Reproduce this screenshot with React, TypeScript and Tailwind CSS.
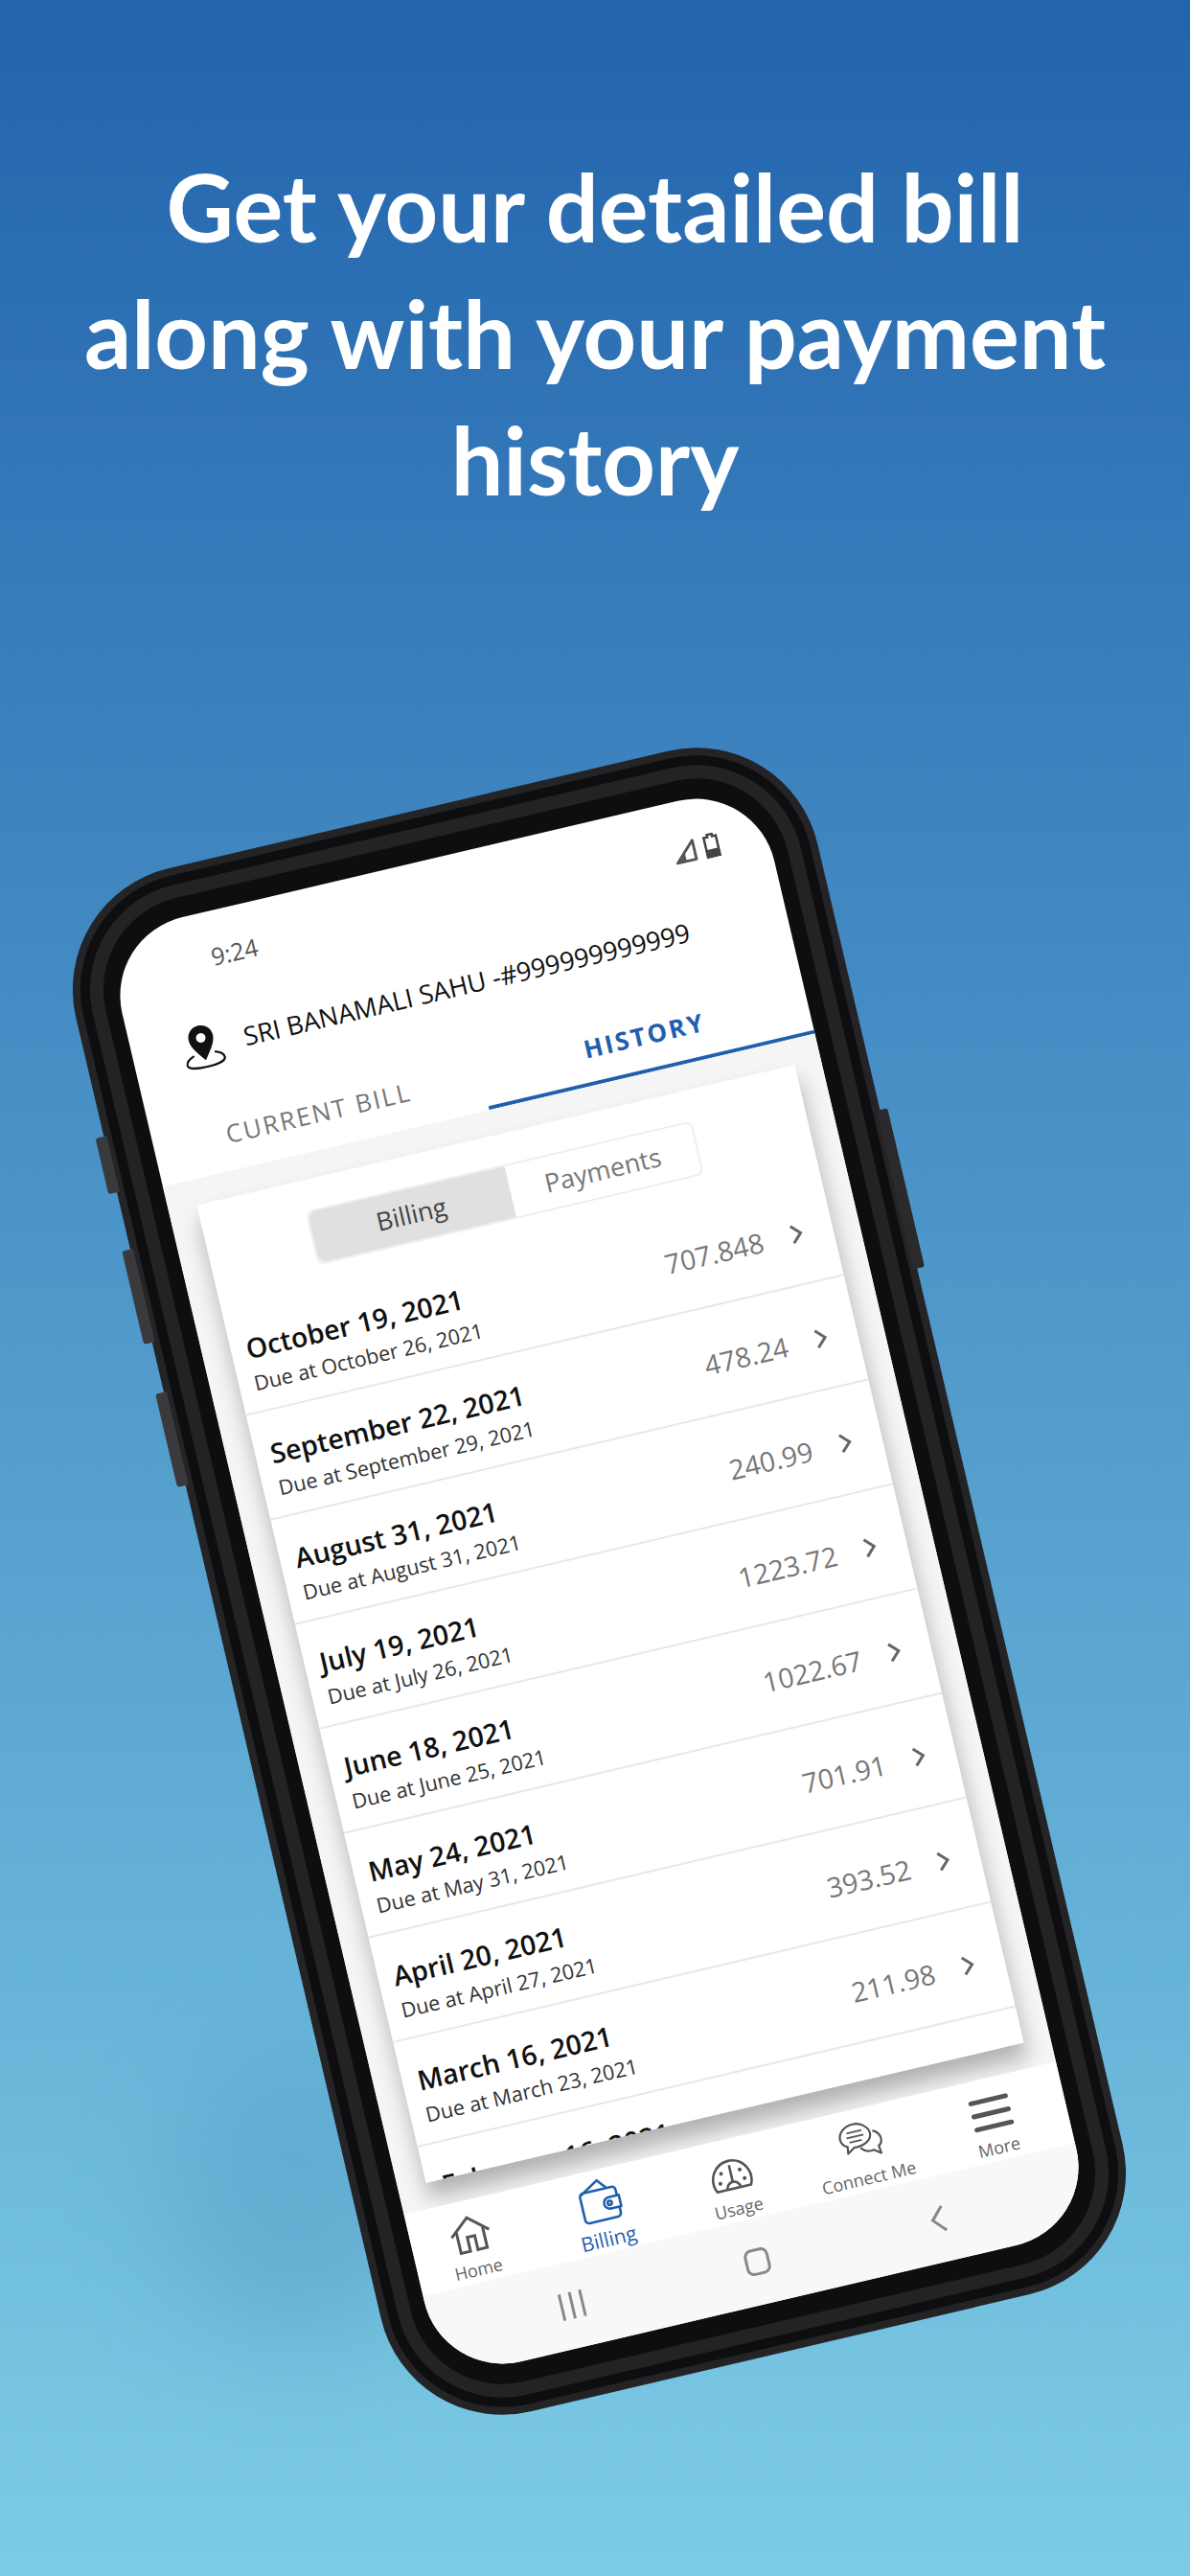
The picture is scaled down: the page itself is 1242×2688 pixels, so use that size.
const bills = [
  { date: 'October 19, 2021', due: 'Due at October 26, 2021', amount: '707.848' },
  { date: 'September 22, 2021', due: 'Due at September 29, 2021', amount: '478.24' },
  { date: 'August 31, 2021', due: 'Due at August 31, 2021', amount: '240.99' },
  { date: 'July 19, 2021', due: 'Due at July 26, 2021', amount: '1223.72' },
  { date: 'June 18, 2021', due: 'Due at June 25, 2021', amount: '1022.67' },
  { date: 'May 24, 2021', due: 'Due at May 31, 2021', amount: '701.91' },
  { date: 'April 20, 2021', due: 'Due at April 27, 2021', amount: '393.52' },
  { date: 'March 16, 2021', due: 'Due at March 23, 2021', amount: '211.98' },
  { date: 'February 16, 2021', due: 'Due at February 23, 2021', amount: '330.10' },
]

function Pin() {
  return (
    <svg width="44" height="46" viewBox="0 0 44 46" fill="none">
      <path d="M22 1C14 1 9 7 9 14c0 8 8 17 13 24 5-7 13-16 13-24C35 7 30 1 22 1z" fill="#111" />
      <circle cx="22" cy="14" r="5" fill="#fff" />
      <path d="M11 31C5 33 2 36 2 39c0 4 9 6 20 6s20-2 20-6c0-3-3-6-9-8" stroke="#111" strokeWidth="2.2" />
    </svg>
  )
}

function Chevron() {
  return (
    <svg width="14" height="24" viewBox="0 0 14 24" fill="none">
      <path d="M2 3l9 9-9 9" stroke="#666" strokeWidth="3" />
    </svg>
  )
}

function HomeIcon() {
  return (
    <svg width="44" height="40" viewBox="0 0 44 40" fill="none" stroke="#555" strokeWidth="3">
      <path d="M2 20L22 3l20 17" />
      <path d="M8 16v22h10V23h8v15h10V16" />
    </svg>
  )
}

function WalletIcon() {
  return (
    <svg width="46" height="46" viewBox="0 0 46 46" fill="none" stroke="#1f5fae" strokeWidth="2.6" strokeLinejoin="round">
      <path d="M4 14L24 2l8 10" />
      <path d="M41 22v-6a4 4 0 0 0-4-4H7a4 4 0 0 0-4 4v24a4 4 0 0 0 4 4h30a4 4 0 0 0 4-4v-6" />
      <path d="M43 22H32a6 6 0 0 0 0 12h11z" />
      <circle cx="32" cy="28" r="2.2" />
    </svg>
  )
}

function GaugeIcon() {
  return (
    <svg width="44" height="36" viewBox="0 0 44 36" fill="none" stroke="#555" strokeWidth="2.6" strokeLinejoin="round">
      <path d="M4 33C1 27 1 20 5 13a20 20 0 0 1 34 0c4 7 4 14 1 20z" />
      <path d="M15 33a7 7 0 0 1 14 0" />
      <path d="M22 8v18" />
      <circle cx="9" cy="25" r="1.5" fill="#555" strokeWidth="1" />
      <circle cx="12" cy="15" r="1.5" fill="#555" strokeWidth="1" />
      <circle cx="32" cy="15" r="1.5" fill="#555" strokeWidth="1" />
      <circle cx="35" cy="25" r="1.5" fill="#555" strokeWidth="1" />
    </svg>
  )
}

function ChatIcon() {
  return (
    <svg width="46" height="42" viewBox="0 0 46 42" fill="none" stroke="#555" strokeWidth="2.2" strokeLinejoin="round">
      <path d="M18 2C9 2 2 8 2 15c0 4 2 7 6 9l-1 7 8-5c1 .2 2 .3 3 .3 9 0 16-5 16-11.300S27 2 18 2z" />
      <path d="M10 10h16M9 15h18M11 20h13" strokeWidth="1.8" />
      <path d="M37 13c4 2 7 6 7 10 0 3-2 6-4 7l1 8-7-5c-5 1-10-1-13-5" />
    </svg>
  )
}

function Bill({ date, due, amount }: { date: string; due: string; amount: string }) {
  return (
    <div className="flex h-[112px] shrink-0 items-start justify-between border-b-2 border-[#e8e8e8] pl-[16px] pr-[31px] pt-[26px]">
      <div>
        <p className="text-[28.5px] leading-[37px] font-semibold text-[#111]">{date}</p>
        <p className="mt-[3px] text-[21.6px] leading-[30px] text-[#333]">{due}</p>
      </div>
      <div className="flex items-center gap-[29px] pt-[13px]">
        <span className="text-[28.5px] leading-[38px] text-[#777]">{amount}</span>
        <Chevron />
      </div>
    </div>
  )
}

function NavItem({ label, active, children }: { label: string; active?: boolean; children: React.ReactNode }) {
  return (
    <div className="flex w-[120px] flex-col items-center justify-end">
      <div className="flex h-[48px] items-end">{children}</div>
      <span className={active ? 'mt-[4px] text-[21px] leading-[28px] text-[#1f5fae]' : 'mt-[4px] text-[18px] leading-[28px] text-[#666]'}>
        {label}
      </span>
    </div>
  )
}

function Phone() {
  return (
    <div className="relative ml-[228px] mt-[277px] h-[1654px] w-[795px] rotate-[-13.2deg]">
      <div className="absolute left-[-9px] top-[257px] h-[60px] w-[12px] rounded-l-[3px] bg-[#3a3a3d]" />
      <div className="absolute left-[-9px] top-[378px] h-[100px] w-[12px] rounded-l-[3px] bg-[#3a3a3d]" />
      <div className="absolute left-[-9px] top-[531px] h-[100px] w-[12px] rounded-l-[3px] bg-[#3a3a3d]" />
      <div className="absolute right-[-8px] top-[415px] h-[170px] w-[12px] rounded-r-[3px] bg-[#2a2a2d]" />
      <div className="h-full w-full rounded-[130px] bg-[#242427] p-[8px]">
        <div className="h-full w-full rounded-[122px] bg-[#0e0e10] p-[10px]">
          <div className="h-full w-full rounded-[112px] bg-[#232326] p-[14px]">
            <div className="h-full w-full rounded-[98px] bg-[#0e0e10] px-[16px] py-[21px]">
              <div className="flex h-full flex-col overflow-hidden rounded-[84px] bg-white font-['Open_Sans',sans-serif]">
                <div className="flex h-[104px] shrink-0 items-end justify-between pb-[38px] pl-[104px] pr-[52px]">
                  <span className="mb-[4px] text-[25px] leading-[30px] text-[#555]">9:24</span>
                  <div className="flex items-center gap-[8px]">
                    <svg width="26" height="26" viewBox="0 0 20 20" fill="none">
                      <path d="M18 2.500V18H2.500z" stroke="#555" strokeWidth="2.2" strokeLinejoin="round" />
                      <path d="M10 9v9H2z" fill="#555" />
                    </svg>
                    <svg width="16" height="26" viewBox="0 0 12 20" fill="none">
                      <path d="M4 1h4v2h3v16H1V3h3z" stroke="#444" strokeWidth="2" />
                      <path d="M1 13h10v6H1z" fill="#444" />
                    </svg>
                  </div>
                </div>
                <div className="flex h-[64px] shrink-0 items-center gap-[22px] pl-[52px]">
                  <Pin />
                  <span className="text-[27px] leading-[34px] text-[#111]">SRI BANAMALI SAHU -#999999999999</span>
                </div>
                <div className="flex h-[101px] shrink-0">
                  <div className="flex w-[50%] items-end justify-center pb-[20px] pl-[2px]">
                    <span className="text-[26px] leading-[36px] tracking-[2px] text-[#777]">CURRENT BILL</span>
                  </div>
                  <div className="flex w-[50%] items-end justify-center border-b-[4px] border-[#1f5fae] pb-[17px] pl-[2px]">
                    <span className="text-[26px] leading-[36px] font-bold tracking-[2.5px] text-[#1f5fae]">HISTORY</span>
                  </div>
                </div>
                <div className="flex min-h-0 flex-1 flex-col bg-[#f5f5f5] pb-[27px] pl-[30px] pr-[28px] pt-[27px]">
                  <div className="flex min-h-0 flex-1 flex-col overflow-hidden bg-white shadow-[0_16px_22px_rgba(0,0,0,0.28)]">
                    <div className="flex shrink-0 justify-center pr-[10px] pt-[32px]">
                      <div className="flex h-[58px] w-[414px] rounded-[8px] border-2 border-[#eeeeee]">
                        <div className="flex w-[211px] items-center justify-center rounded-l-[8px] bg-[#e0e0e0] text-[26.5px] text-[#444]">Billing</div>
                        <div className="flex flex-1 items-center justify-center text-[27px] text-[#777]">Payments</div>
                      </div>
                    </div>
                    <div className="flex flex-col pt-[24px]">
                      {bills.map(b => <Bill key={b.date} {...b} />)}
                    </div>
                  </div>
                </div>
                <div className="relative flex h-[87px] shrink-0 justify-between bg-white pl-[3px] pr-[18px]">
                  <NavItem label="Home"><HomeIcon /></NavItem>
                  <NavItem label="Billing" active><WalletIcon /></NavItem>
                  <NavItem label="Usage"><GaugeIcon /></NavItem>
                  <NavItem label="Connect Me"><ChatIcon /></NavItem>
                  <NavItem label="More">
                    <div className="flex flex-col gap-[9px] pb-[2px]">
                      <div className="h-[5px] w-[42px] rounded-full bg-[#555]" />
                      <div className="h-[5px] w-[42px] rounded-full bg-[#555]" />
                      <div className="h-[5px] w-[42px] rounded-full bg-[#555]" />
                    </div>
                  </NavItem>
                </div>
                <div className="flex h-[90px] shrink-0 items-center justify-between bg-[#f8f8f8] pl-[137px] pr-[148px]">
                  <div className="flex gap-[8px]">
                    <div className="h-[28px] w-[3px] bg-[#888]" />
                    <div className="h-[28px] w-[3px] bg-[#888]" />
                    <div className="h-[28px] w-[3px] bg-[#888]" />
                  </div>
                  <div className="h-[28px] w-[26px] rounded-[8px] border-[3px] border-[#888]" />
                  <svg width="18" height="30" viewBox="0 0 18 30" fill="none">
                    <path d="M15 2L3 15l12 13" stroke="#888" strokeWidth="3" />
                  </svg>
                </div>
              </div>
            </div>
          </div>
        </div>
      </div>
    </div>
  )
}

export default function App() {
  return (
    <div className="relative h-[2688px] w-[1242px] overflow-hidden bg-gradient-to-b from-[#2264ad] to-[#7dcce5]">
      <div className="absolute left-[180px] top-[2150px] h-[300px] w-[260px] rounded-full bg-[#2f6f9f] opacity-20 blur-[60px]" />
      <div className="relative">
        <h1 className="px-[40px] pt-[150px] text-center font-['Lato',sans-serif] text-[97px] leading-[132px] font-bold text-white">
          Get your detailed bill
          <br />
          along with your payment
          <br />
          history
        </h1>
        <Phone />
      </div>
    </div>
  )
}
